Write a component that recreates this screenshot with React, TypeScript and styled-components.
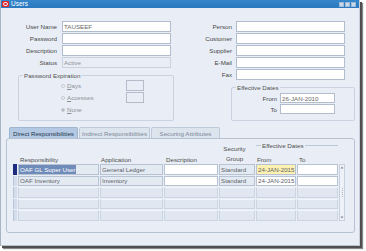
import React from 'react';
import styled, { createGlobalStyle } from 'styled-components';

const GlobalStyle = createGlobalStyle`
  html, body { margin: 0; padding: 0; background: #fff; }
  body {
    font-family: 'Liberation Sans', Arial, sans-serif;
    font-size: 6.2px;
    color: #4a4a4a;
  }
`;

const COLS = '4px 81px 63px 54px 36px 40px 41px 6px';

const Stage = styled.div`
  width: 366px;
  height: 251px;
  overflow: hidden;
  background: #fff;
`;

const Window = styled.div`
  width: 360px;
  height: 246px;
  box-sizing: border-box;
  background: #e9eef6;
  border-left: 1px solid #a9b4c2;
  border-right: 1px solid #c5ceda;
  border-bottom: 1px solid #b7c2cf;
  box-shadow: 2px 2px 0 #4f4f4f, 3px 3px 1px #8a8a8a;
  display: flex;
  flex-direction: column;
`;

const TitleBar = styled.div`
  height: 8px;
  flex: none;
  background: linear-gradient(#3586cb, #2a79c0);
  display: flex;
  align-items: center;
  padding: 0 3px 0 1px;
  gap: 2px;
  color: #fff;
`;

const Title = styled.span`
  font-size: 6.5px;
  line-height: 8px;
  flex: 1;
`;

const TitleButtons = styled.div`
  display: flex;
  gap: 1px;
`;

const WinButton = styled.span`
  width: 5px;
  height: 5px;
  box-sizing: border-box;
  background: #c9d9ec;
  border: 1px solid #9fb8d6;
`;

const Body = styled.div`
  flex: 1;
  display: flex;
  flex-direction: column;
  padding-top: 13px;
`;

const TopSection = styled.div`
  display: flex;
`;

const Column = styled.div<{ $width?: number }>`
  width: ${({ $width }) => ($width ? `${$width}px` : 'auto')};
  flex: ${({ $width }) => ($width ? 'none' : '1')};
  display: flex;
  flex-direction: column;
`;

const FieldGrid = styled.div<{ $label: number; $gap: number; $input: number; $row?: number }>`
  display: grid;
  grid-template-columns: ${({ $label, $input }) => `${$label}px ${$input}px`};
  column-gap: ${({ $gap }) => $gap}px;
  row-gap: 1px;
  grid-auto-rows: ${({ $row = 11 }) => $row}px;
  align-items: center;
`;

const Label = styled.span`
  text-align: right;
  white-space: nowrap;
  color: #484848;
`;

const Input = styled.div<{ $disabled?: boolean }>`
  height: 100%;
  box-sizing: border-box;
  border: 1px solid ${({ $disabled }) => ($disabled ? '#c9d2dd' : '#b1bdcc')};
  background: ${({ $disabled }) => ($disabled ? '#e9eef6' : '#fff')};
  color: ${({ $disabled }) => ($disabled ? '#8d9299' : '#6a6a6a')};
  padding: 0 1px;
  display: flex;
  align-items: center;
  white-space: nowrap;
`;

const GroupBox = styled.fieldset<{ $left: number; $width: number }>`
  margin: 4px 0 0 ${({ $left }) => $left}px;
  width: ${({ $width }) => $width}px;
  box-sizing: border-box;
  padding: 0;
  border: 1px solid #c9d2de;
  border-radius: 2px;
  min-inline-size: 0;
`;

const Legend = styled.legend`
  margin-left: 4px;
  padding: 0 1px;
  line-height: 7px;
  color: #505050;
`;

const RadioGrid = styled.div`
  display: grid;
  grid-template-columns: 65px 18px;
  grid-auto-rows: 11px;
  row-gap: 1px;
  padding: 1px 0 5px 42px;
  align-items: center;
`;

const RadioItem = styled.label`
  grid-column: 1;
  display: flex;
  align-items: center;
  gap: 2px;
  color: #8c9096;
`;

const RadioCircle = styled.span<{ $checked?: boolean }>`
  width: 4px;
  height: 4px;
  box-sizing: border-box;
  border-radius: 50%;
  border: 1px solid #c3c9d1;
  background: ${({ $checked }) =>
    $checked ? 'radial-gradient(circle, #444 0 40%, #f4f6f9 55%)' : '#f4f6f9'};
`;

const SmallBox = styled.span`
  grid-column: 2;
  height: 11px;
  box-sizing: border-box;
  border: 1px solid #b3bcc8;
`;

const DatesGrid = styled.div`
  padding: 2px 0 6px 0;
`;

const TabArea = styled.div`
  margin: 6px 0 0 5px;
  width: 349px;
  display: flex;
  flex-direction: column;
`;

const TabStrip = styled.div`
  display: flex;
  gap: 1px;
  padding-left: 3px;
`;

const Tab = styled.div<{ $active?: boolean; $width: number }>`
  width: ${({ $width }) => $width}px;
  height: 11px;
  box-sizing: border-box;
  border: 1px solid ${({ $active }) => ($active ? '#9fb4cd' : '#bfcad8')};
  border-bottom: none;
  border-radius: 2px 2px 0 0;
  background: ${({ $active }) => ($active ? '#b3c9e3' : '#dce4ee')};
  color: ${({ $active }) => ($active ? '#23324a' : '#7e8998')};
  display: flex;
  align-items: center;
  justify-content: center;
  white-space: nowrap;
`;

const Panel = styled.div`
  height: 95px;
  box-sizing: border-box;
  border: 1px solid #b6c2d2;
  border-radius: 3px;
  padding-left: 6px;
`;

const HeaderGrid = styled.div`
  display: grid;
  grid-template-columns: ${COLS};
  grid-template-rows: 16px 9px;
  column-gap: 1px;
  color: #4c4c4c;
`;

const HeadCell = styled.div<{ $pad?: number }>`
  grid-row: 2;
  padding-left: ${({ $pad = 1 }) => $pad}px;
  line-height: 9px;
  white-space: nowrap;
`;

const TwoLineHead = styled.div`
  grid-column: 5;
  grid-row: 1 / span 2;
  align-self: end;
  line-height: 10px;
  text-align: center;
  padding-right: 5px;
`;

const GroupHead = styled.div`
  grid-column: 6 / span 2;
  grid-row: 1;
  align-self: start;
  margin-top: 3px;
  line-height: 7px;
  display: flex;
  align-items: center;
  gap: 1px;
  white-space: nowrap;

  &::before,
  &::after {
    content: '';
    height: 1px;
    background: #bcc7d5;
  }
  &::before {
    width: 5px;
  }
  &::after {
    flex: 1;
  }
`;

const BodyGrid = styled.div`
  display: grid;
  grid-template-columns: ${COLS};
  grid-template-rows: repeat(5, 10.5px);
  column-gap: 1px;
  row-gap: 1px;
`;

type CellKind = 'readonly' | 'edit' | 'current' | 'empty';

const cellBg: Record<CellKind, string> = {
  readonly: '#e4eaf2',
  edit: '#ffffff',
  current: '#fdf1b2',
  empty: '#e0e7f1',
};

const Cell = styled.div<{ $kind: CellKind }>`
  box-sizing: border-box;
  border: 1px solid ${({ $kind }) => ($kind === 'empty' ? '#cbd5e2' : '#b7c3d2')};
  border-top-color: ${({ $kind }) => ($kind === 'empty' ? '#f2f5fa' : '#b7c3d2')};
  background: ${({ $kind }) => cellBg[$kind]};
  color: #5e626a;
  padding: 0 1px;
  display: flex;
  align-items: center;
  white-space: nowrap;
  overflow: hidden;
`;

const Indicator = styled.div<{ $active?: boolean }>`
  box-sizing: border-box;
  background: ${({ $active }) => ($active ? '#1d2a7e' : '#d3dcea')};
  border-left: 1px solid ${({ $active }) => ($active ? '#1d2a7e' : '#b9c6d8')};
`;

const Selected = styled.span`
  background: #6f8bb9;
  color: #fff;
  padding: 1px 1px;
  margin-left: -1px;
`;

const ScrollBar = styled.div`
  grid-column: 8;
  grid-row: 1 / span 5;
  box-sizing: border-box;
  border: 1px solid #c7d1de;
  background: #eef2f8;
  display: flex;
  flex-direction: column;
  align-items: center;
  justify-content: space-between;
`;

const Grip = styled.span`
  width: 1px;
  height: 9px;
  background: repeating-linear-gradient(#a9b5c5 0 1px, transparent 1px 2px);
`;

const Arrow = ({ down }: { down?: boolean }) => (
  <svg width="4" height="5" viewBox="0 0 4 5">
    <path d={down ? 'M0.5 1.5 L3.5 1.5 L2 3.5 Z' : 'M0.5 3.5 L3.5 3.5 L2 1.5 Z'} fill="#7a8596" />
  </svg>
);

const AppIcon = () => (
  <svg width="7" height="6" viewBox="0 0 7 6">
    <rect x="0" y="0" width="7" height="6" rx="1" fill="#d8262b" />
    <rect x="1.5" y="1.5" width="4" height="3" rx="1.5" fill="none" stroke="#fff" strokeWidth="0.9" />
  </svg>
);

type Row = { resp: string; app: string; sec: string; from: string; selected?: boolean };

const rows: Row[] = [
  { resp: 'OAF GL Super User', app: 'General Ledger', sec: 'Standard', from: '24-JAN-2015', selected: true },
  { resp: 'OAF Inventory', app: 'Inventory', sec: 'Standard', from: '24-JAN-2015' },
];

export default function App() {
  return (
    <>
      <GlobalStyle />
      <Stage>
        <Window>
          <TitleBar>
            <AppIcon />
            <Title>Users</Title>
            <TitleButtons>
              <WinButton />
              <WinButton />
              <WinButton />
            </TitleButtons>
          </TitleBar>
          <Body>
            <TopSection>
              <Column $width={174}>
                <FieldGrid $label={56} $gap={5} $input={109}>
                  <Label>User Name</Label>
                  <Input>TAUSEEF</Input>
                  <Label>Password</Label>
                  <Input />
                  <Label>Description</Label>
                  <Input />
                  <Label>Status</Label>
                  <Input $disabled>Active</Input>
                </FieldGrid>
                <GroupBox $left={17} $width={156}>
                  <Legend>Password Expiration</Legend>
                  <RadioGrid>
                    <RadioItem>
                      <RadioCircle />
                      <span>
                        <u>D</u>ays
                      </span>
                    </RadioItem>
                    <SmallBox />
                    <RadioItem>
                      <RadioCircle />
                      <span>
                        <u>A</u>ccesses
                      </span>
                    </RadioItem>
                    <SmallBox />
                    <RadioItem>
                      <RadioCircle $checked />
                      <span>
                        <u>N</u>one
                      </span>
                    </RadioItem>
                  </RadioGrid>
                </GroupBox>
              </Column>
              <Column>
                <FieldGrid $label={57} $gap={4} $input={109}>
                  <Label>Person</Label>
                  <Input />
                  <Label>Customer</Label>
                  <Input />
                  <Label>Supplier</Label>
                  <Input />
                  <Label>E-Mail</Label>
                  <Input />
                  <Label>Fax</Label>
                  <Input />
                </FieldGrid>
                <GroupBox $left={56} $width={124}>
                  <Legend>Effective Dates</Legend>
                  <DatesGrid>
                    <FieldGrid $label={45} $gap={3} $input={55} $row={10}>
                      <Label>From</Label>
                      <Input>26-JAN-2010</Input>
                      <Label>To</Label>
                      <Input />
                    </FieldGrid>
                  </DatesGrid>
                </GroupBox>
              </Column>
            </TopSection>
            <TabArea>
              <TabStrip>
                <Tab $active $width={69}>Direct Responsibilities</Tab>
                <Tab $width={71}>Indirect Responsibilities</Tab>
                <Tab $width={69}>Securing Attributes</Tab>
              </TabStrip>
              <Panel>
                <HeaderGrid>
                  <HeadCell style={{ gridColumn: 2 }} $pad={2}>Responsibility</HeadCell>
                  <HeadCell style={{ gridColumn: 3 }}>Application</HeadCell>
                  <HeadCell style={{ gridColumn: 4 }} $pad={2}>Description</HeadCell>
                  <TwoLineHead>
                    Security
                    <br />
                    Group
                  </TwoLineHead>
                  <GroupHead>Effective Dates</GroupHead>
                  <HeadCell style={{ gridColumn: 6 }}>From</HeadCell>
                  <HeadCell style={{ gridColumn: 7 }} $pad={2}>To</HeadCell>
                </HeaderGrid>
                <BodyGrid>
                  {rows.map((r, i) => (
                    <React.Fragment key={i}>
                      <Indicator $active={r.selected} />
                      <Cell $kind="readonly">{r.selected ? <Selected>{r.resp}</Selected> : r.resp}</Cell>
                      <Cell $kind="readonly">{r.app}</Cell>
                      <Cell $kind="edit" />
                      <Cell $kind="readonly">{r.sec}</Cell>
                      <Cell $kind={r.selected ? 'current' : 'edit'}>{r.from}</Cell>
                      <Cell $kind="edit" />
                    </React.Fragment>
                  ))}
                  {[0, 1, 2].map((i) => (
                    <React.Fragment key={`e${i}`}>
                      <Indicator />
                      <Cell $kind="empty" />
                      <Cell $kind="empty" />
                      <Cell $kind="empty" />
                      <Cell $kind="empty" />
                      <Cell $kind="empty" />
                      <Cell $kind="empty" />
                    </React.Fragment>
                  ))}
                  <ScrollBar>
                    <Arrow />
                    <Grip />
                    <Arrow down />
                  </ScrollBar>
                </BodyGrid>
              </Panel>
            </TabArea>
          </Body>
        </Window>
      </Stage>
    </>
  );
}
